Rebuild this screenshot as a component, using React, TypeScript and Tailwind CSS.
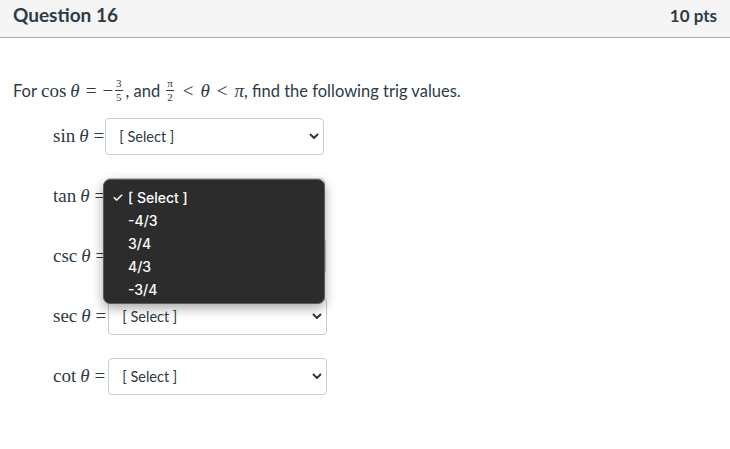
import React from "react";

const lato = { fontFamily: "Lato, 'Open Sans', sans-serif" };
const serif = { fontFamily: "'Liberation Serif', 'DejaVu Serif', serif" };

function Frac({ n, d }: { n: string; d: string }) {
  return (
    <span className="inline-flex flex-col items-center leading-none text-[11px] relative top-[-1px] mx-[2px]" style={serif}>
      <span className="px-[1px] pb-[1px]">{n}</span>
      <span className="self-stretch border-t border-[#2d3b45]" />
      <span className="px-[1px] pt-[1px]">{d}</span>
    </span>
  );
}

function Chevron() {
  return (
    <svg width="10" height="7" viewBox="0 0 10 7" className="shrink-0">
      <path d="M1.5 1.5 L5 5 L8.5 1.5" stroke="#2d3b45" strokeWidth="2" fill="none" strokeLinecap="round" strokeLinejoin="round" />
    </svg>
  );
}

function FakeSelect({ hidden = false }: { hidden?: boolean }) {
  return (
    <div className="w-[219px] h-[37px] border border-[#c7cdd1] rounded-[4px] bg-white flex items-center justify-between pl-[13px] pr-[4px]">
      <span className={`text-[14.5px] text-[#2d3b45] ${hidden ? "invisible" : ""}`} style={lato}>[ Select ]</span>
      <Chevron />
    </div>
  );
}

function Row({ fn, ml = "ml-0", hidden = false }: { fn: string; ml?: string; hidden?: boolean }) {
  return (
    <div className="flex items-center h-[37px]">
      <span className="text-[19px] text-[#2d3b45] whitespace-nowrap flex items-center" style={serif}>
        <span>{fn}</span>
        <i className="ml-[4px]">θ</i>
        <span className="ml-[5px] mr-[1px] text-[19px]">=</span>
      </span>
      <div className={ml}>
        <FakeSelect hidden={hidden} />
      </div>
    </div>
  );
}

export default function App() {
  const items = ["[ Select ]", "-4/3", "3/4", "4/3", "-3/4"];
  return (
    <div className="relative w-[730px] h-[449px] bg-white overflow-hidden text-[#2d3b45]" style={lato}>
      <div className="h-[38px] bg-[#f5f5f5] border-b border-[#aaaaaa] flex items-center justify-between px-[13px] pb-[6px]">
        <span className="text-[19px] font-bold text-[#2d3b45]">Question 16</span>
        <span className="text-[17px] font-bold text-[#2d3b45]">10 pts</span>
      </div>
      <div className="px-[13px] pt-[42px]">
        <p className="text-[16.5px] text-[#2d3b45] h-[22px] flex items-center whitespace-nowrap">
          <span>For</span>
          <span style={serif} className="text-[19px] flex items-center ml-[4px]">
            <span>cos</span>
            <i className="ml-[4px]">θ</i>
            <span className="ml-[6px]">=</span>
            <span className="ml-[6px]">−</span>
          </span>
          <Frac n="3" d="5" />
          <span className="ml-[1px]">, and</span>
          <span style={serif} className="text-[19px] flex items-center ml-[4px]">
            <Frac n="π" d="2" />
            <span className="ml-[7px]">&lt;</span>
            <i className="ml-[7px]">θ</i>
            <span className="ml-[7px]">&lt;</span>
            <i className="ml-[7px]">π</i>
          </span>
          <span>, find the following trig values.</span>
        </p>
        <div className="pl-[40px] pt-[16px] flex flex-col gap-[23px]">
          <Row fn="sin" />
          <Row fn="tan" hidden />
          <Row fn="csc" hidden />
          <Row fn="sec" ml="ml-[1px]" />
          <Row fn="cot" ml="ml-[2px]" />
        </div>
      </div>
      <div
        className="absolute left-[103px] top-[179px] w-[222px] h-[125px] bg-[#2c2c2c] border border-[#5c5c5c] rounded-[7px] pt-[6px] shadow-[0_4px_12px_rgba(0,0,0,0.35)]"
        style={{ fontFamily: "Inter, 'Liberation Sans', Arial, sans-serif" }}
      >
        {items.map((it, i) => (
          <div key={i} className="h-[23px] flex items-center text-[14px] font-medium text-white">
            <span className="w-[24px] pl-[8px] text-[13px]">{i === 0 ? "✓" : ""}</span>
            <span>{it}</span>
          </div>
        ))}
      </div>
    </div>
  );
}
